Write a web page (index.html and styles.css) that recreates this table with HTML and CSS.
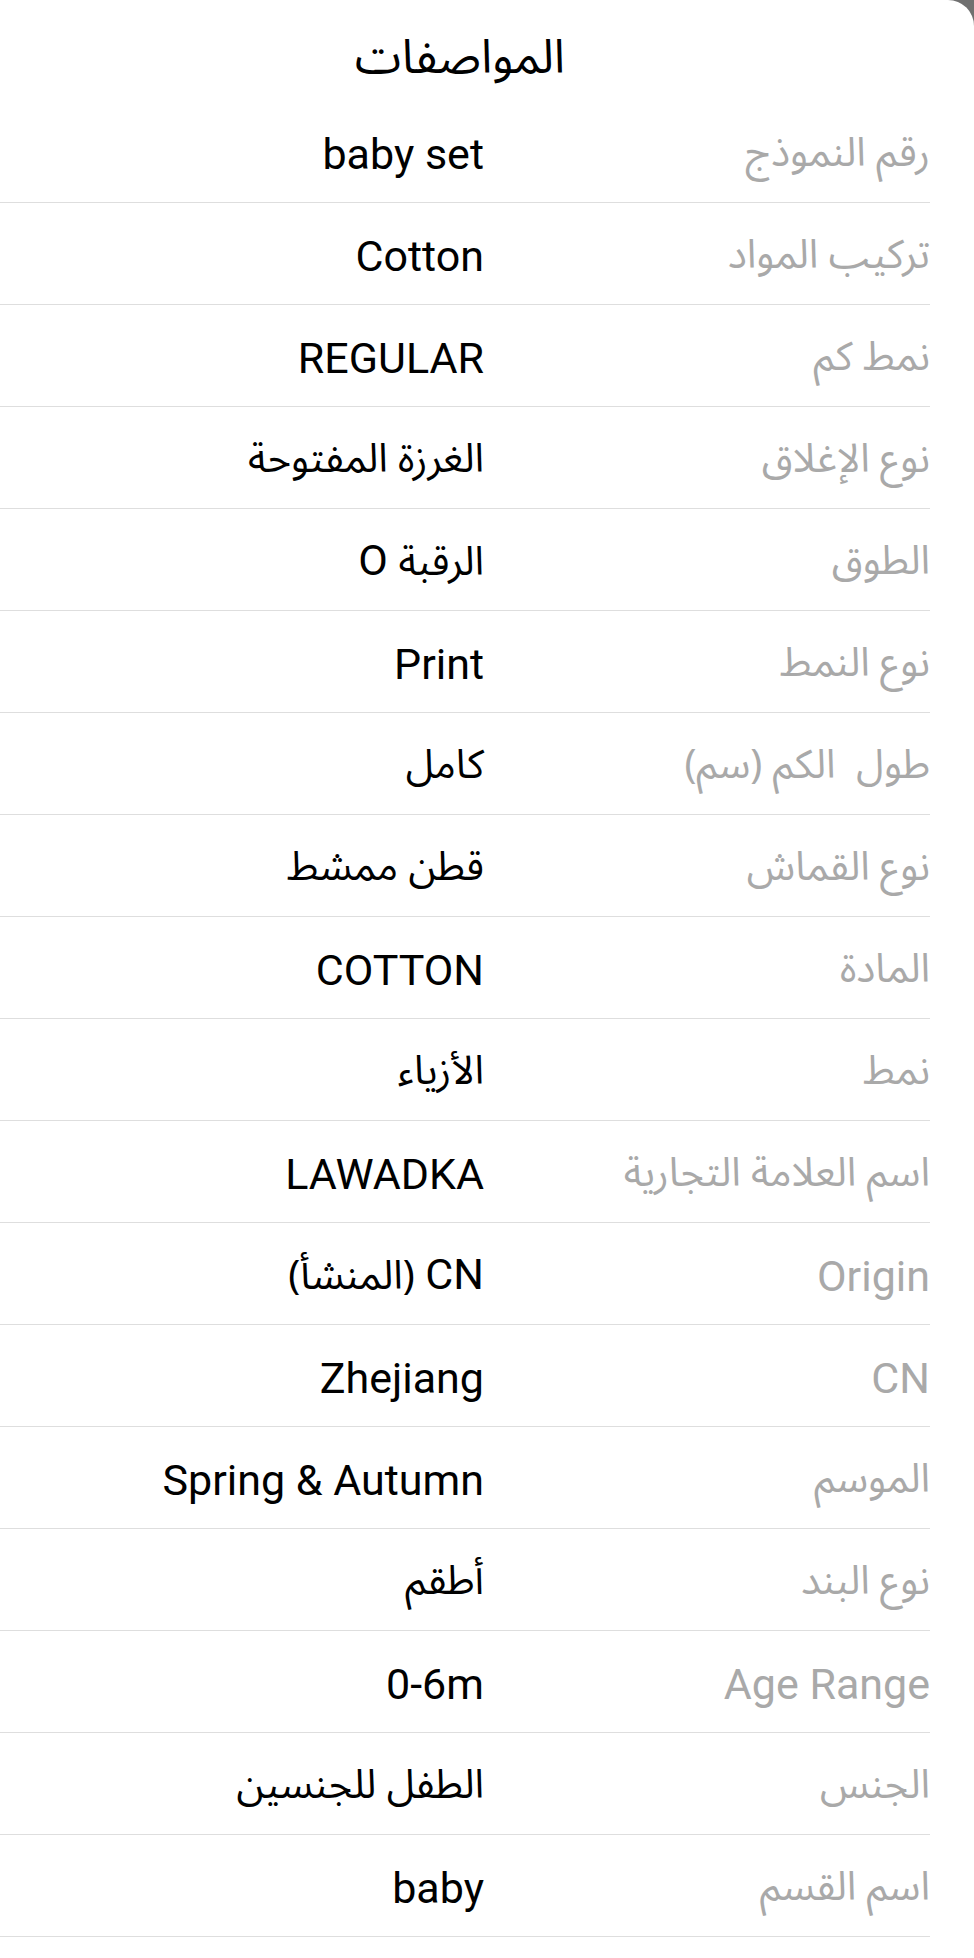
FILE: index.html
```html
<!DOCTYPE html>
<html lang="ar" dir="rtl">
<head>
<meta charset="utf-8">
<title>المواصفات</title>
<link rel="stylesheet" href="styles.css">
</head>
<body>
<div class="sheet">
  <h1 class="title">المواصفات</h1>
  <div class="specs">
    <div class="row"><div class="label ar">رقم النموذج</div><div class="value">baby set</div></div>
    <div class="row"><div class="label ar">تركيب المواد</div><div class="value">Cotton</div></div>
    <div class="row"><div class="label ar">نمط كم</div><div class="value">REGULAR</div></div>
    <div class="row"><div class="label ar">نوع الإغلاق</div><div class="value ar">الغرزة المفتوحة</div></div>
    <div class="row"><div class="label ar">الطوق</div><div class="value"><span class="ar">الرقبة</span> O</div></div>
    <div class="row"><div class="label ar">نوع النمط</div><div class="value">Print</div></div>
    <div class="row"><div class="label ar">طول&nbsp; الكم (سم)</div><div class="value ar">كامل</div></div>
    <div class="row"><div class="label ar">نوع القماش</div><div class="value ar">قطن ممشط</div></div>
    <div class="row"><div class="label ar">المادة</div><div class="value">COTTON</div></div>
    <div class="row"><div class="label ar">نمط</div><div class="value ar">الأزياء</div></div>
    <div class="row"><div class="label ar">اسم العلامة التجارية</div><div class="value">LAWADKA</div></div>
    <div class="row"><div class="label">Origin</div><div class="value">CN <span class="ar">(المنشأ)</span></div></div>
    <div class="row"><div class="label">CN</div><div class="value">Zhejiang</div></div>
    <div class="row"><div class="label ar">الموسم</div><div class="value">Spring &amp; Autumn</div></div>
    <div class="row"><div class="label ar">نوع البند</div><div class="value ar">أطقم</div></div>
    <div class="row"><div class="label">Age Range</div><div class="value">0-6m</div></div>
    <div class="row"><div class="label ar">الجنس</div><div class="value ar">الطفل للجنسين</div></div>
    <div class="row"><div class="label ar">اسم القسم</div><div class="value">baby</div></div>
  </div>
</div>
</body>
</html>
```

FILE: styles.css
```css
html, body {
  margin: 0;
  padding: 0;
}
body {
  background: #707070;
  font-family: Roboto, "DejaVu Sans", sans-serif;
}
.sheet {
  background: #ffffff;
  border-top-right-radius: 26px;
  min-height: 1958px;
  box-sizing: border-box;
}
.title {
  margin: 0;
  height: 101px;
  box-sizing: border-box;
  padding: 28px 54px 0 0;
  font-family: "Noto Sans Arabic", "Noto Naskh Arabic", "DejaVu Sans", sans-serif;
  font-weight: normal;
  font-size: 47px;
  line-height: 60px;
  color: #000;
  text-align: center;
}
.specs {
  margin-right: 44px;
}
.row {
  display: grid;
  grid-template-columns: 446px 1fr;
  align-items: center;
  height: 102px;
  box-sizing: border-box;
  padding-top: 4px;
  border-bottom: 1px solid #dedede;
  font-size: 43px;
  line-height: 50px;
}
.ar {
  font-family: "Noto Sans Arabic", "Noto Naskh Arabic", "DejaVu Sans", sans-serif;
  font-size: 40px;
}
.label {
  color: #a9a9a9;
  white-space: nowrap;
}
.value {
  color: #000;
  white-space: nowrap;
}
```
